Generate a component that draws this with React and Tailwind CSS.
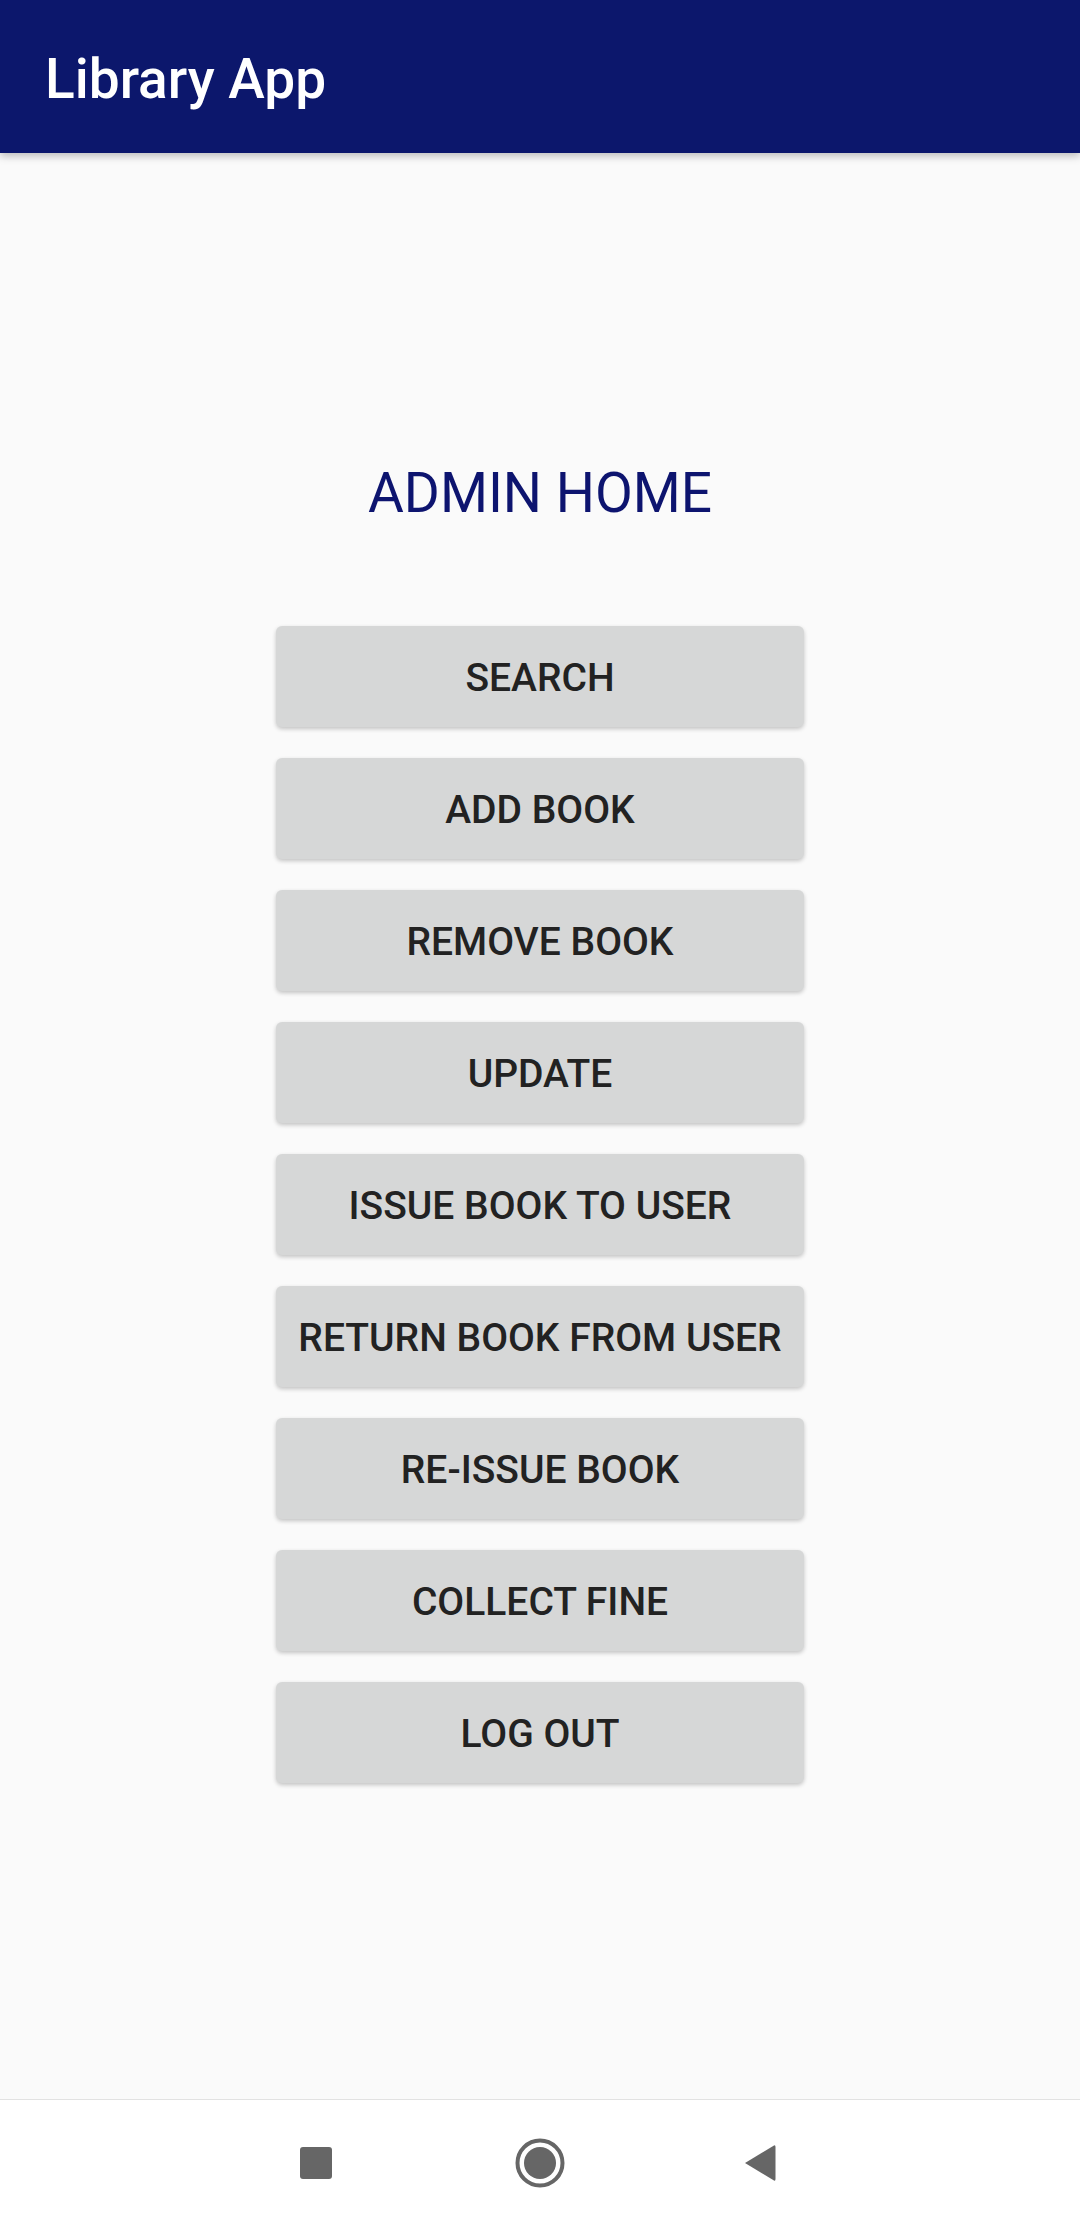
export default function App() {
  const buttons = [
    'SEARCH',
    'ADD BOOK',
    'REMOVE BOOK',
    'UPDATE',
    'ISSUE BOOK TO USER',
    'RETURN BOOK FROM USER',
    'RE-ISSUE BOOK',
    'COLLECT FINE',
    'LOG OUT',
  ]

  return (
    <div className="flex h-[2226px] flex-col bg-[#fafafa] font-['Roboto',_'Noto_Sans',_sans-serif]">
      {/* Toolbar */}
      <header className="relative z-10 flex h-[153px] shrink-0 items-center bg-[#0c176c] pl-[45px] shadow-[0_3px_8px_rgba(0,0,0,0.25)]">
        <h1 className="pt-[5px] text-[55px] font-medium leading-none text-white">Library App</h1>
      </header>

      {/* Content */}
      <main className="flex flex-1 flex-col items-center">
        <h2 className="mt-[308px] text-[55px] leading-[64px] text-[#0d146f]">ADMIN HOME</h2>

        <div className="mt-[101px] flex flex-col gap-[31px]">
          {buttons.map(label => (
            <button
              key={label}
              className="flex h-[101px] w-[528px] items-center justify-center rounded-[6px] bg-[#d6d7d7] pt-[4px] text-[39px] font-medium text-[#222222] shadow-[0_2px_4px_rgba(0,0,0,0.22)]"
            >
              {label}
            </button>
          ))}
        </div>
      </main>

      {/* Navigation bar */}
      <nav className="flex h-[127px] shrink-0 items-center justify-center border-t border-[#e2e2e2] bg-white">
        <div className="flex w-[224px] justify-center">
          <div className="h-[32px] w-[32px] rounded-[3px] bg-[#666666]" />
        </div>
        <div className="flex w-[224px] justify-center">
          <svg width="50" height="50" viewBox="0 0 50 50">
            <circle cx="25" cy="25" r="22.5" fill="none" stroke="#666666" strokeWidth="4" />
            <circle cx="25" cy="25" r="16" fill="#666666" />
          </svg>
        </div>
        <div className="flex w-[224px] justify-center">
          <svg className="mr-[8px]" width="34" height="38" viewBox="0 0 34 38">
            <path d="M2 19 L31 1.5 Q32.5 0.8 32.5 3 L32.5 35 Q32.5 37.2 31 36.5 Z" fill="#666666" strokeLinejoin="round" />
          </svg>
        </div>
      </nav>
    </div>
  )
}
